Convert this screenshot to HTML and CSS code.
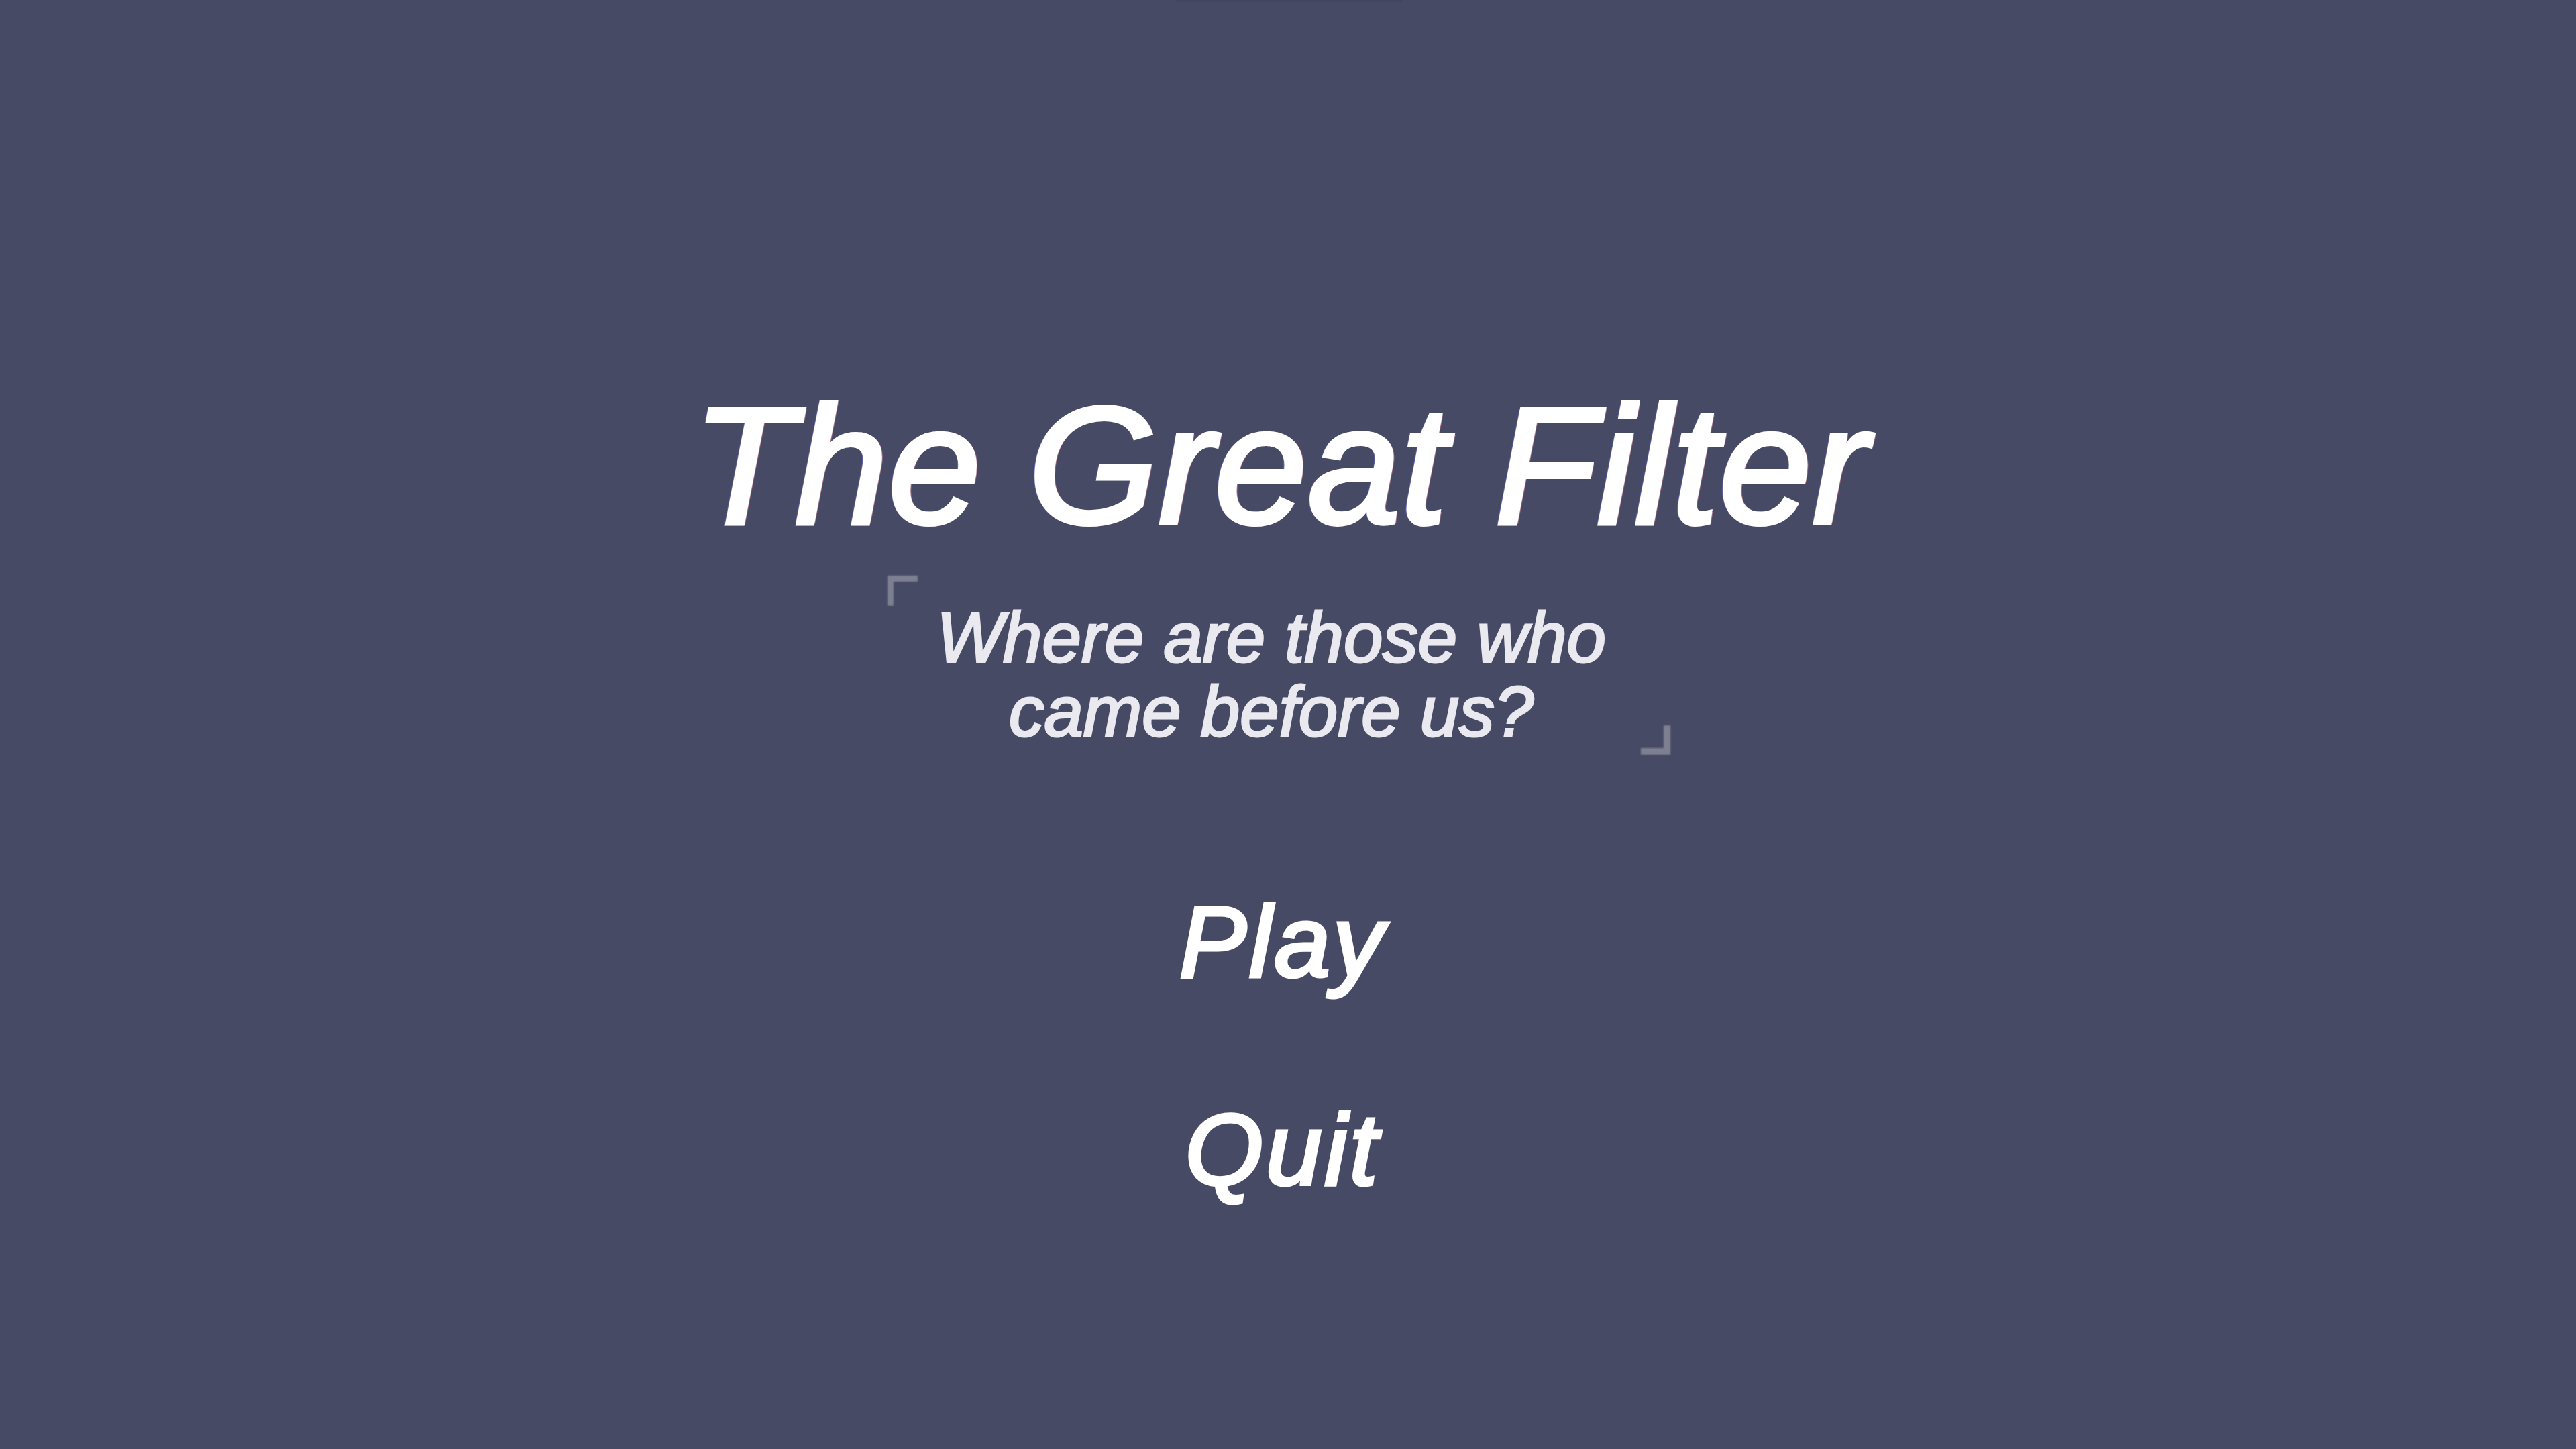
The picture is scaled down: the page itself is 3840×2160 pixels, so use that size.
FILE: index.html
```html
<!DOCTYPE html>
<html lang="en">
<head>
<meta charset="utf-8">
<title>The Great Filter</title>
<link rel="stylesheet" href="styles.css">
</head>
<body>
<div class="top-shade"></div>
<main class="menu">
  <h1 class="title">The Great Filter</h1>
  <div class="tagline">
    <p class="tagline-text">Where are those who<br>came before us?</p>
  </div>
  <nav class="buttons">
    <button class="menu-btn play">Play</button>
    <button class="menu-btn quit">Quit</button>
  </nav>
</main>
</body>
</html>
```

FILE: styles.css
```css
html, body {
  margin: 0;
  padding: 0;
}

body {
  width: 3840px;
  height: 2160px;
  background: #474a64;
  overflow: hidden;
  font-family: "Liberation Sans", Arial, sans-serif;
  position: relative;
}

.top-shade {
  position: absolute;
  top: 0;
  left: 1753px;
  width: 337px;
  height: 3px;
  background: #42455c;
}

.menu {
  display: flex;
  flex-direction: column;
  align-items: center;
  padding-top: 570px;
}

.title {
  margin: 0 0 0 -22px;
  font-size: 248px;
  line-height: 248px;
  font-style: italic;
  font-weight: normal;
  letter-spacing: 1px;
  color: #ffffff;
  white-space: nowrap;
  -webkit-text-stroke: 6px #ffffff;
  text-shadow: -4px 0 rgba(120, 120, 230, 0.6), 4px 0 rgba(225, 140, 150, 0.6);
}

.tagline {
  position: relative;
  margin-top: 40px;
  width: 1167px;
  height: 267px;
  box-sizing: border-box;
  padding: 38px 22px 0 0;
  display: flex;
  justify-content: center;
  margin-left: -28px;
}

.tagline::before,
.tagline::after {
  content: "";
  position: absolute;
  border-color: rgba(255, 255, 255, 0.3);
  border-style: solid;
  filter: blur(1px);
}

.tagline::before {
  top: 0;
  left: 0;
  width: 36px;
  height: 36px;
  border-width: 9px 0 0 9px;
}

.tagline::after {
  bottom: 0;
  right: 0;
  width: 34px;
  height: 34px;
  border-width: 0 10px 10px 0;
}

.tagline-text {
  margin: 0;
  font-size: 105px;
  line-height: 110px;
  font-style: italic;
  letter-spacing: 0;
  color: #e9e9ef;
  -webkit-text-stroke: 3px #e9e9ef;
  text-align: center;
  white-space: nowrap;
}

.buttons {
  display: flex;
  flex-direction: column;
  align-items: center;
  gap: 162px;
  margin-top: 205px;
  margin-left: -16px;
}

.menu-btn {
  background: none;
  border: none;
  padding: 0;
  margin: 0;
  font-family: "Liberation Sans", Arial, sans-serif;
  font-size: 150px;
  line-height: 148px;
  font-style: italic;
  letter-spacing: 4px;
  color: #ffffff;
  -webkit-text-stroke: 5px #ffffff;
  cursor: pointer;
}
```
